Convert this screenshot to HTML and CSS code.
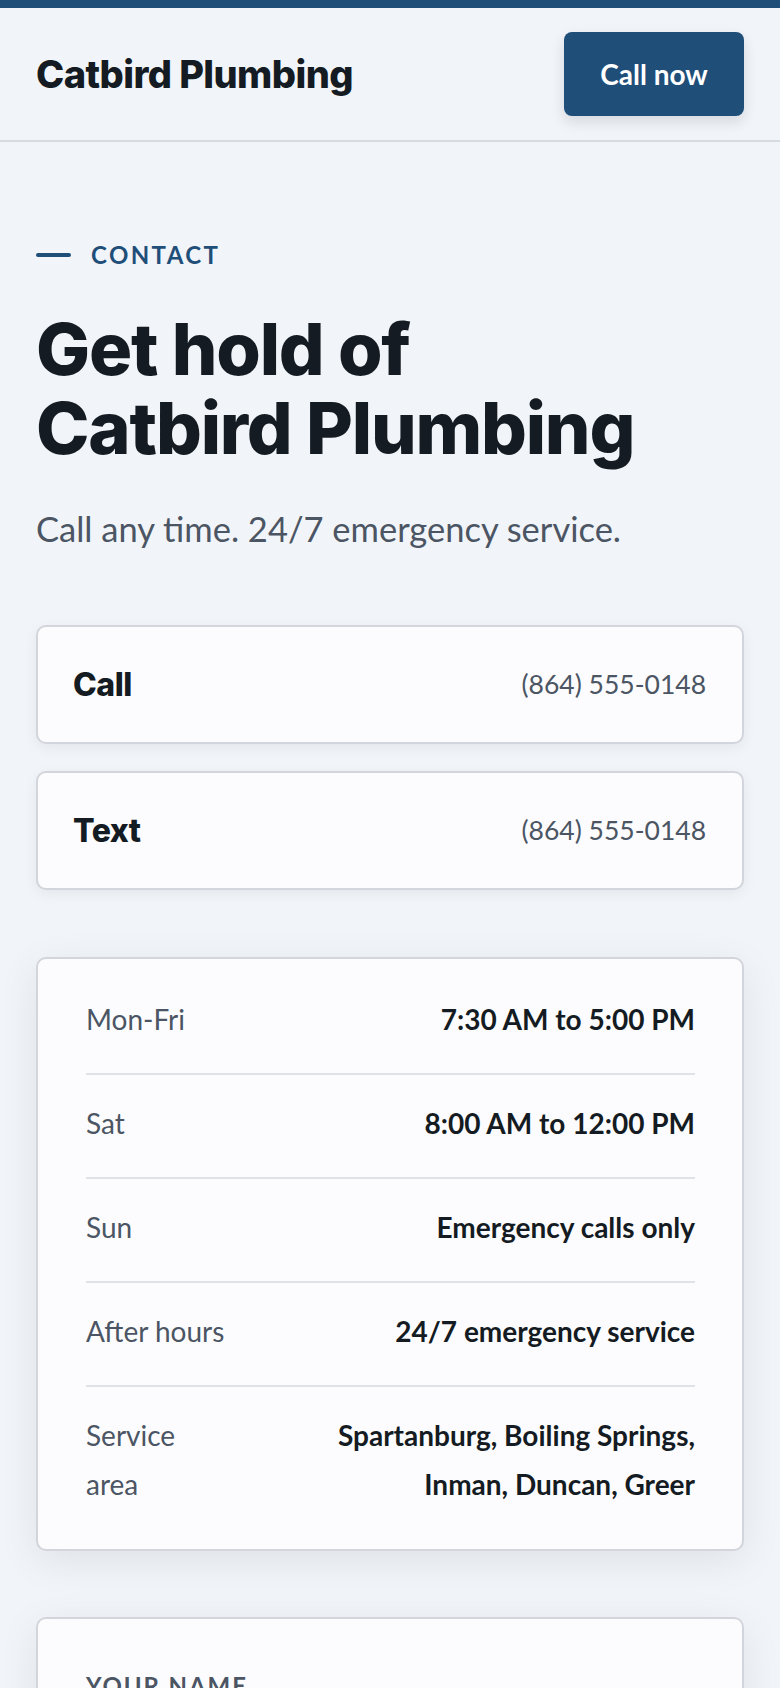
FILE: index.html
```html
<!DOCTYPE html>
<html lang="en">
<head>
<meta charset="utf-8">
<title>Contact - Catbird Plumbing</title>
<link rel="stylesheet" href="styles.css">
</head>
<body>
<div class="topbar"></div>
<header class="site-header">
  <div class="logo">Catbird Plumbing</div>
  <a class="btn-call" href="#">Call now</a>
</header>
<main class="page">
  <p class="eyebrow"><span class="dash"></span>CONTACT</p>
  <h1 class="title">Get hold of<br>Catbird Plumbing</h1>
  <p class="lead">Call any time. 24/7 emergency service.</p>

  <div class="contact-list">
    <a class="contact-card" href="#"><span class="contact-label">Call</span><span class="contact-value">(864) 555-0148</span></a>
    <a class="contact-card" href="#"><span class="contact-label">Text</span><span class="contact-value">(864) 555-0148</span></a>
  </div>

  <section class="hours-card">
    <div class="hours-row"><span class="h-label">Mon-Fri</span><span class="h-value">7:30 AM to 5:00 PM</span></div>
    <div class="hours-row"><span class="h-label">Sat</span><span class="h-value">8:00 AM to 12:00 PM</span></div>
    <div class="hours-row"><span class="h-label">Sun</span><span class="h-value">Emergency calls only</span></div>
    <div class="hours-row"><span class="h-label">After hours</span><span class="h-value">24/7 emergency service</span></div>
    <div class="hours-row hours-row--long"><span class="h-label">Service area</span><span class="h-value">Spartanburg, Boiling Springs, Inman, Duncan, Greer</span></div>
  </section>

  <form class="form-card">
    <label class="field-label" for="name">YOUR NAME</label>
    <input class="field-input" id="name" type="text">
    <label class="field-label" for="phone">PHONE</label>
    <input class="field-input" id="phone" type="tel">
  </form>
</main>
</body>
</html>
```
FILE: styles.css
```css
* { box-sizing: border-box; }
html, body { margin: 0; padding: 0; }
body {
  background: #f1f4f8;
  color: #141b22;
  font-family: Lato, "Noto Sans", sans-serif;
}
.topbar { height: 8px; background: #1f4e79; }
.site-header {
  height: 134px;
  padding: 0 36px;
  display: flex;
  align-items: center;
  justify-content: space-between;
  border-bottom: 2px solid #d6dbe1;
}
.logo {
  font-family: Inter, "Liberation Sans", sans-serif;
  font-weight: 800;
  font-size: 38px;
  letter-spacing: -0.015em;
  color: #141b22;
}
.btn-call {
  height: 84px;
  width: 180px;
  display: flex;
  align-items: center;
  justify-content: center;
  background: #1f4e79;
  color: #fff;
  text-decoration: none;
  border-radius: 8px;
  font-weight: 700;
  font-size: 28px;
  box-shadow: 0 6px 14px rgba(15, 30, 50, 0.12);
}
.page { padding: 98px 36px 40px; }
.eyebrow {
  margin: 0;
  display: flex;
  align-items: center;
  gap: 20px;
  font-size: 24px;
  line-height: 30px;
  font-weight: 700;
  letter-spacing: 0.1em;
  color: #1f4e79;
}
.dash { width: 35px; height: 4px; background: #1f4e79; border-radius: 2px; }
.title {
  margin: 39px 0 0;
  font-family: Inter, "Liberation Sans", sans-serif;
  font-weight: 800;
  font-size: 72px;
  line-height: 79px;
  letter-spacing: -0.017em;
  color: #141b22;
}
.lead {
  margin: 37px 0 0;
  font-size: 34.5px;
  line-height: 49.5px;
  color: #4b5563;
}
.contact-list {
  margin-top: 71px;
  display: flex;
  flex-direction: column;
  gap: 27px;
}
.contact-card {
  height: 119px;
  padding: 0 36px 0 35px;
  display: flex;
  align-items: center;
  justify-content: space-between;
  background: #fcfcfe;
  border: 2px solid #d2d5db;
  border-radius: 10px;
  box-shadow: 0 4px 14px rgba(15, 30, 50, 0.06);
  text-decoration: none;
}
.contact-label {
  font-family: Inter, "Liberation Sans", sans-serif;
  font-weight: 800;
  font-size: 32px;
  letter-spacing: -0.015em;
  color: #141b22;
}
.contact-value {
  font-size: 26.5px;
  color: #4b5563;
}
.hours-card {
  margin-top: 67px;
  padding: 12px 47px 11px 48px;
  background: #fcfcfe;
  border: 2px solid #d2d5db;
  border-radius: 10px;
  box-shadow: 0 10px 40px rgba(15, 30, 50, 0.08);
}
.hours-row {
  display: flex;
  justify-content: space-between;
  gap: 32px;
  padding: 24px 0 29px;
  font-size: 28px;
  line-height: 49px;
  border-bottom: 2px solid #dfe2e6;
}
.hours-row:last-child { border-bottom: 0; }
.h-label { color: #4b5563; }
.h-value { max-width: 425px; text-align: right; font-weight: 700; color: #141b22; }
.hours-row--long .h-label { flex: 0 0 110px; }
.form-card {
  margin-top: 66px;
  padding: 52px 48px 48px;
  background: #fcfcfe;
  border: 2px solid #d2d5db;
  border-radius: 10px;
  box-shadow: 0 10px 40px rgba(15, 30, 50, 0.08);
  display: flex;
  flex-direction: column;
}
.field-label {
  font-size: 24px;
  font-weight: 700;
  letter-spacing: 0.08em;
  color: #4b5563;
}
.field-input {
  margin: 14px 0 32px;
  height: 88px;
  border: 2px solid #c9ced5;
  border-radius: 8px;
  background: #fff;
  font-size: 30px;
}
```
